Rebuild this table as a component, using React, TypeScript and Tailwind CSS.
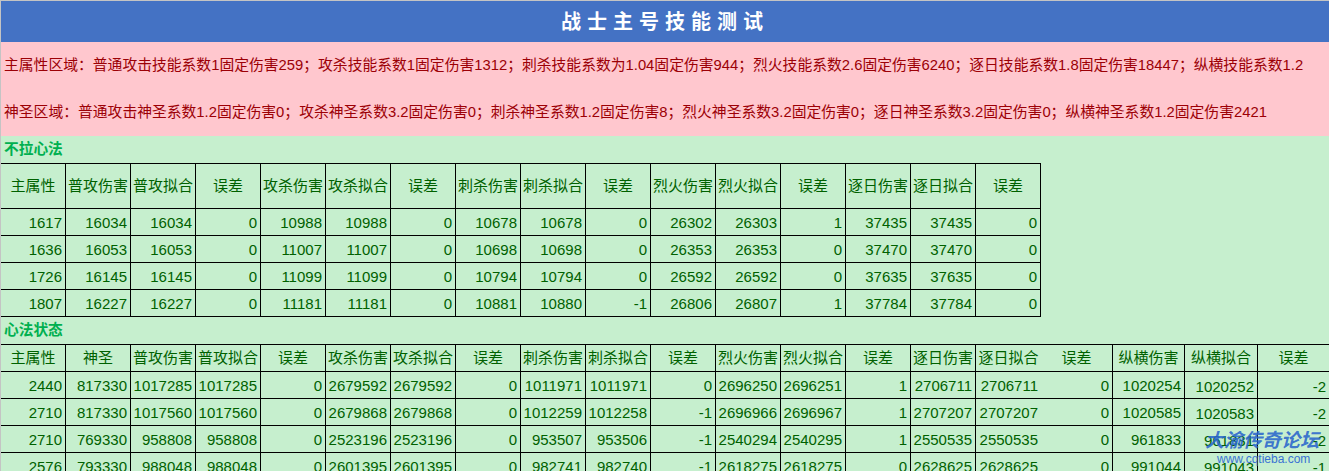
const FONT = "font-['Liberation_Sans','Noto_Sans_CJK_SC',sans-serif]";

const head1 = [
  "主属性", "普攻伤害", "普攻拟合", "误差", "攻杀伤害", "攻杀拟合", "误差", "刺杀伤害",
  "刺杀拟合", "误差", "烈火伤害", "烈火拟合", "误差", "逐日伤害", "逐日拟合", "误差",
];

const rows1 = [
  ["1617", "16034", "16034", "0", "10988", "10988", "0", "10678", "10678", "0", "26302", "26303", "1", "37435", "37435", "0"],
  ["1636", "16053", "16053", "0", "11007", "11007", "0", "10698", "10698", "0", "26353", "26353", "0", "37470", "37470", "0"],
  ["1726", "16145", "16145", "0", "11099", "11099", "0", "10794", "10794", "0", "26592", "26592", "0", "37635", "37635", "0"],
  ["1807", "16227", "16227", "0", "11181", "11181", "0", "10881", "10880", "-1", "26806", "26807", "1", "37784", "37784", "0"],
];

const head2 = [
  "主属性", "神圣", "普攻伤害", "普攻拟合", "误差", "攻杀伤害", "攻杀拟合", "误差", "刺杀伤害", "刺杀拟合",
  "误差", "烈火伤害", "烈火拟合", "误差", "逐日伤害", "逐日拟合", "误差", "纵横伤害", "纵横拟合", "误差",
];

const rows2 = [
  ["2440", "817330", "1017285", "1017285", "0", "2679592", "2679592", "0", "1011971", "1011971", "0", "2696250", "2696251", "1", "2706711", "2706711", "0", "1020254", "1020252", "-2"],
  ["2710", "817330", "1017560", "1017560", "0", "2679868", "2679868", "0", "1012259", "1012258", "-1", "2696966", "2696967", "1", "2707207", "2707207", "0", "1020585", "1020583", "-2"],
  ["2710", "769330", "958808", "958808", "0", "2523196", "2523196", "0", "953507", "953506", "-1", "2540294", "2540295", "1", "2550535", "2550535", "0", "961833", "961831", "-2"],
  ["2576", "793330", "988048", "988048", "0", "2601395", "2601395", "0", "982741", "982740", "-1", "2618275", "2618275", "0", "2628625", "2628625", "0", "991044", "991043", "-1"],
];

// column classes for the second table (widths + which have a right border)
function col2(i: number) {
  if (i === 15) return "w-[65px]";
  if (i === 16) return "w-[72px] border-r border-black";
  if (i === 17) return "w-[72px] border-r border-black";
  if (i === 18) return "w-[73px] border-r border-black";
  if (i === 19) return "w-[72px] border-r border-black";
  return "w-[65px] border-r border-black";
}

export default function App() {
  return (
    <div className={`${FONT} relative h-[471px] w-full overflow-hidden border-t border-l border-[#c4c4c4] bg-[#c6efce]`}>
      {/* title */}
      <div className="flex h-[41px] items-center justify-center bg-[#4472c4] text-[20px] font-bold tracking-[6px] text-white">
        战士主号技能测试
      </div>

      {/* description */}
      <div className="bg-[#ffc7ce] text-[14.8px] text-[#9c0006]">
        <div className="flex h-[47px] items-center pl-[3px] whitespace-nowrap">
          主属性区域：普通攻击技能系数1固定伤害259；攻杀技能系数1固定伤害1312；刺杀技能系数为1.04固定伤害944；烈火技能系数2.6固定伤害6240；逐日技能系数1.8固定伤害18447；纵横技能系数1.2
        </div>
        <div className="flex h-[47px] items-center pl-[3px] whitespace-nowrap">
          神圣区域：普通攻击神圣系数1.2固定伤害0；攻杀神圣系数3.2固定伤害0；刺杀神圣系数1.2固定伤害8；烈火神圣系数3.2固定伤害0；逐日神圣系数3.2固定伤害0；纵横神圣系数1.2固定伤害2421
        </div>
      </div>

      {/* table 1 */}
      <div className="flex h-[27px] items-center pl-[3px] text-[14.7px] font-bold text-[#00b050]">不拉心法</div>
      <div className="w-[1040px] text-[15px] text-[#006100]">
        <div className="flex h-[46px] border-y border-black">
          {head1.map((h, i) => (
            <div key={i} className="flex w-[65px] shrink-0 items-center justify-center border-r border-black whitespace-nowrap">
              {h}
            </div>
          ))}
        </div>
        {rows1.map((r, ri) => (
          <div key={ri} className="flex h-[27px] border-b border-black">
            {r.map((v, i) => (
              <div key={i} className="flex w-[65px] shrink-0 items-center justify-end border-r border-black pt-[2px] pr-[3px]">
                {v}
              </div>
            ))}
          </div>
        ))}
      </div>

      {/* table 2 */}
      <div className="flex h-[27px] items-center pl-[3px] text-[14.7px] font-bold text-[#00b050]">心法状态</div>
      <div className="text-[15px] text-[#006100]">
        <div className="flex h-[28px] border-y border-black">
          {head2.map((h, i) => (
            <div key={i} className={`${col2(i)} flex shrink-0 items-center justify-center whitespace-nowrap`}>
              {h}
            </div>
          ))}
        </div>
        {rows2.map((r, ri) => (
          <div key={ri} className="flex h-[27px] border-b border-black">
            {r.map((v, i) => (
              <div
                key={i}
                className={`${col2(i)} flex shrink-0 justify-end pr-[3px] ${i >= 18 ? "items-end" : "items-center pt-[2px]"}`}
              >
                {v}
              </div>
            ))}
          </div>
        ))}
      </div>

      {/* watermark */}
      <div className="pointer-events-none absolute top-[429px] left-[1204px] flex flex-col items-start whitespace-nowrap">
        <span className="text-[19px] leading-[22px] font-bold italic text-[#2a66cc]/90">大渝传奇论坛</span>
        <span className="ml-[12px] text-[12px] leading-[14px] text-[#3a72d4]">www.cqtieba.com</span>
      </div>
    </div>
  );
}
